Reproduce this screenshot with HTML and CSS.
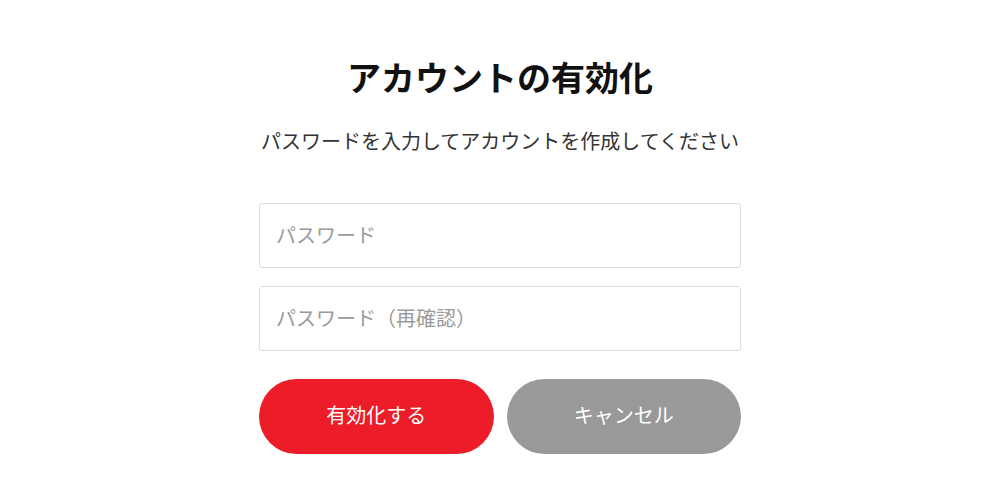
FILE: index.html
```html
<!DOCTYPE html>
<html lang="ja">
<head>
<meta charset="utf-8">
<link rel="stylesheet" href="styles.css">
</head>
<body>
<main class="panel">
  <h1 class="title">アカウントの有効化</h1>
  <p class="lead">パスワードを入力してアカウントを作成してください</p>
  <form class="form">
    <input class="field" type="password" placeholder="パスワード">
    <input class="field" type="password" placeholder="パスワード（再確認）">
    <div class="actions">
      <button type="button" class="btn btn-primary">有効化する</button>
      <button type="button" class="btn btn-cancel">キャンセル</button>
    </div>
  </form>
</main>
</body>
</html>
```

FILE: styles.css
```css
html, body {
  margin: 0;
  padding: 0;
  background: #fff;
}
body {
  font-family: "Noto Sans CJK JP", "Noto Sans", sans-serif;
  color: #222;
}
.panel {
  width: 482px;
  margin: 0 auto;
  padding-top: 55px;
}
.title {
  margin: 0;
  font-size: 34px;
  line-height: 44px;
  font-weight: 700;
  text-align: center;
  color: #111;
}
.lead {
  margin: 28px 0 0;
  font-size: 20px;
  line-height: 28px;
  text-align: center;
  color: #333;
  white-space: nowrap;
}
.form {
  margin-top: 48px;
  display: flex;
  flex-direction: column;
  gap: 18px;
}
.field {
  box-sizing: border-box;
  width: 100%;
  height: 65px;
  border: 1px solid #ddd;
  border-radius: 3px;
  padding: 0 16px 3px;
  font-family: inherit;
  font-size: 20px;
  color: #333;
  outline: none;
}
.field::placeholder {
  color: #9a9a9a;
}
.actions {
  margin-top: 10px;
  display: flex;
  gap: 13px;
}
.btn {
  flex: 1;
  height: 75px;
  border: none;
  border-radius: 38px;
  padding: 0 0 4px;
  font-family: inherit;
  font-size: 20px;
  color: #fff;
  cursor: pointer;
}
.btn-primary {
  background: #ed1c29;
}
.btn-cancel {
  background: #999;
}
```
